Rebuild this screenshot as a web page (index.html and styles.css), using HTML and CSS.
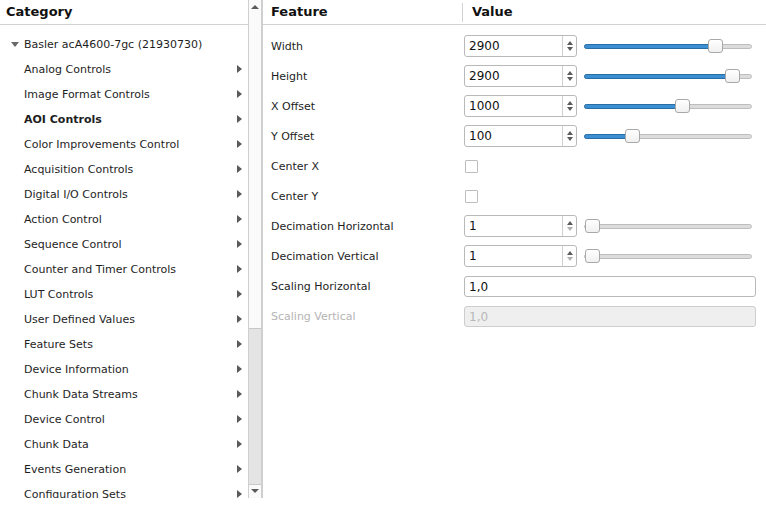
FILE: index.html
```html
<!DOCTYPE html>
<html>
<head>
<meta charset="utf-8">
<link rel="stylesheet" href="styles.css">
</head>
<body>
<div class="app">
  <div class="left">
    <div class="tree">
      <div class="hdr">Category</div>
      <div class="items">
        <div class="item root"><span class="down"></span>Basler acA4600-7gc (21930730)</div>
        <div class="item child">Analog Controls<span class="arr"></span></div>
        <div class="item child">Image Format Controls<span class="arr"></span></div>
        <div class="item child bold">AOI Controls<span class="arr"></span></div>
        <div class="item child">Color Improvements Control<span class="arr"></span></div>
        <div class="item child">Acquisition Controls<span class="arr"></span></div>
        <div class="item child">Digital I/O Controls<span class="arr"></span></div>
        <div class="item child">Action Control<span class="arr"></span></div>
        <div class="item child">Sequence Control<span class="arr"></span></div>
        <div class="item child">Counter and Timer Controls<span class="arr"></span></div>
        <div class="item child">LUT Controls<span class="arr"></span></div>
        <div class="item child">User Defined Values<span class="arr"></span></div>
        <div class="item child">Feature Sets<span class="arr"></span></div>
        <div class="item child">Device Information<span class="arr"></span></div>
        <div class="item child">Chunk Data Streams<span class="arr"></span></div>
        <div class="item child">Device Control<span class="arr"></span></div>
        <div class="item child">Chunk Data<span class="arr"></span></div>
        <div class="item child">Events Generation<span class="arr"></span></div>
        <div class="item child">Configuration Sets<span class="arr"></span></div>
      </div>
    </div>
    <div class="vscroll">
      <div class="sbtn up"></div>
      <div class="track"><div class="thumb"></div></div>
      <div class="sbtn dn"></div>
    </div>
  </div>
  <div class="right">
    <div class="rhdr">
      <div class="hcol feat">Feature</div>
      <div class="hcol val">Value</div>
    </div>
    <div class="rows">
      <div class="row"><div class="lbl">Width</div><div class="ctl">
        <div class="spin"><span class="sval">2900</span><span class="sbtns"><i class="su"></i><i class="sd"></i></span></div>
        <div class="slider"><div class="fill" style="width:130px"></div><div class="handle" style="left:123px"></div></div>
      </div></div>
      <div class="row"><div class="lbl">Height</div><div class="ctl">
        <div class="spin"><span class="sval">2900</span><span class="sbtns"><i class="su"></i><i class="sd"></i></span></div>
        <div class="slider"><div class="fill" style="width:147px"></div><div class="handle" style="left:140px"></div></div>
      </div></div>
      <div class="row"><div class="lbl">X Offset</div><div class="ctl">
        <div class="spin"><span class="sval">1000</span><span class="sbtns"><i class="su"></i><i class="sd"></i></span></div>
        <div class="slider"><div class="fill" style="width:97px"></div><div class="handle" style="left:90px"></div></div>
      </div></div>
      <div class="row"><div class="lbl">Y Offset</div><div class="ctl">
        <div class="spin"><span class="sval">100</span><span class="sbtns"><i class="su"></i><i class="sd"></i></span></div>
        <div class="slider"><div class="fill" style="width:47px"></div><div class="handle" style="left:40px"></div></div>
      </div></div>
      <div class="row"><div class="lbl">Center X</div><div class="ctl"><div class="chk"></div></div></div>
      <div class="row"><div class="lbl">Center Y</div><div class="ctl"><div class="chk"></div></div></div>
      <div class="row"><div class="lbl">Decimation Horizontal</div><div class="ctl">
        <div class="spin"><span class="sval">1</span><span class="sbtns"><i class="su"></i><i class="sd dis"></i></span></div>
        <div class="slider"><div class="handle" style="left:0px"></div></div>
      </div></div>
      <div class="row"><div class="lbl">Decimation Vertical</div><div class="ctl">
        <div class="spin"><span class="sval">1</span><span class="sbtns"><i class="su"></i><i class="sd dis"></i></span></div>
        <div class="slider"><div class="handle" style="left:0px"></div></div>
      </div></div>
      <div class="row"><div class="lbl">Scaling Horizontal</div><div class="ctl"><div class="edit">1,0</div></div></div>
      <div class="row disabled"><div class="lbl">Scaling Vertical</div><div class="ctl"><div class="edit dis">1,0</div></div></div>
    </div>
  </div>
</div>
</body>
</html>
```
FILE: styles.css
```css
* { box-sizing: border-box; }
html, body { margin: 0; padding: 0; background: #fff; }
body {
  font-family: "DejaVu Sans", sans-serif;
  font-size: 11px;
  color: #1e1e1e;
  width: 766px;
  height: 505px;
  overflow: hidden;
}
.app { display: flex; height: 505px; }
.left { display: flex; width: 262px; height: 498px; }
.tree { width: 248px; display: flex; flex-direction: column; overflow: hidden; }
.hdr {
  height: 25px;
  flex: none;
  border-bottom: 1px solid #d2d2d2;
  font-weight: bold;
  font-size: 13px;
  padding: 4px 0 0 6px;
  color: #111;
}
.items { padding-top: 7px; }
.item {
  height: 25px;
  flex: none;
  display: flex;
  align-items: center;
  position: relative;
  white-space: nowrap;
}
.item.root { padding-left: 11px; }
.item.child { padding-left: 24px; }
.item.bold { font-weight: bold; }
.down {
  width: 0; height: 0;
  border-left: 4px solid transparent;
  border-right: 4px solid transparent;
  border-top: 5px solid #6a6a6a;
  margin-right: 5px;
}
.arr {
  position: absolute;
  left: 237px;
  top: 8px;
  width: 0; height: 0;
  border-top: 4px solid transparent;
  border-bottom: 4px solid transparent;
  border-left: 5px solid #5a5a5a;
}
.vscroll {
  width: 14px;
  border-left: 1px solid #cfcfcf;
  border-right: 1px solid #cfcfcf;
  display: flex;
  flex-direction: column;
  background: #fafafa;
}
.sbtn { height: 13px; position: relative; }
.sbtn.up::after, .sbtn.dn::after {
  content: "";
  position: absolute;
  left: 2px;
  width: 0; height: 0;
  border-left: 4px solid transparent;
  border-right: 4px solid transparent;
}
.sbtn.up::after { top: 5px; border-bottom: 4px solid #5a5a5a; }
.sbtn.dn::after { top: 4px; border-top: 4px solid #5a5a5a; }
.track { flex: 1; display: flex; flex-direction: column; justify-content: flex-end; }
.thumb {
  height: 157px;
  background: #e4e4e4;
  border-top: 1px solid #c8c8c8;
  border-bottom: 1px solid #c8c8c8;
}
.right {
  flex: 1;
  border-left: 1px solid #cfcfcf;
  height: 498px;
}
.rhdr {
  height: 25px;
  border-bottom: 1px solid #d2d2d2;
  display: flex;
  font-weight: bold;
  font-size: 13px;
  color: #111;
}
.hcol { padding-top: 4px; }
.feat { width: 200px; padding-left: 8px; border-right: 1px solid #d2d2d2; margin: 3px 0 2px; padding-top: 1px; }
.val { padding-left: 9px; }
.rows { padding-top: 6px; }
.row { height: 30px; display: flex; align-items: center; }
.lbl { width: 201px; padding-left: 8px; }
.row.disabled .lbl { color: #b4b4b4; }
.ctl { flex: 1; display: flex; align-items: center; padding-right: 10px; }
.spin {
  width: 113px;
  height: 22px;
  border: 1px solid #b9b9b9;
  border-radius: 3px;
  display: flex;
  background: #fff;
  font-size: 12px;
}
.sval { flex: 1; padding: 3px 0 0 4px; color: #111; }
.sbtns {
  width: 14px;
  border-left: 1px solid #d0d0d0;
  display: flex;
  flex-direction: column;
  justify-content: center;
  align-items: center;
  gap: 2px;
}
.su { width: 0; height: 0; border-left: 3.5px solid transparent; border-right: 3.5px solid transparent; border-bottom: 4px solid #5a5a5a; }
.sd { width: 0; height: 0; border-left: 3.5px solid transparent; border-right: 3.5px solid transparent; border-top: 4px solid #5a5a5a; }
.sd.dis { border-top-color: #b0b0b0; }
.slider {
  position: relative;
  margin-left: 7px;
  width: 168px;
  height: 5px;
  background: #dcdcdc;
  border: 1px solid #bdbdbd;
  border-radius: 3px;
}
.fill {
  height: 5px;
  margin: -1px 0 0 -1px;
  background: #3d8fd4;
  border: 1px solid #2a6ea6;
  border-radius: 3px;
}
.handle {
  position: absolute;
  top: -6px;
  width: 15px;
  height: 14px;
  background: linear-gradient(#ffffff, #f0f0f0);
  border: 1px solid #a8a8a8;
  border-radius: 3px;
}
.chk {
  width: 13px;
  height: 13px;
  border: 1px solid #bdbdbd;
  border-radius: 1px;
  background: #fff;
  margin-left: 1px;
}
.edit {
  width: 292px;
  height: 21px;
  border: 1px solid #b9b9b9;
  border-radius: 3px;
  font-size: 12px;
  padding: 3px 0 0 4px;
  color: #111;
}
.edit.dis { background: #efefef; color: #b8b8b8; border-color: #cdcdcd; }
```
